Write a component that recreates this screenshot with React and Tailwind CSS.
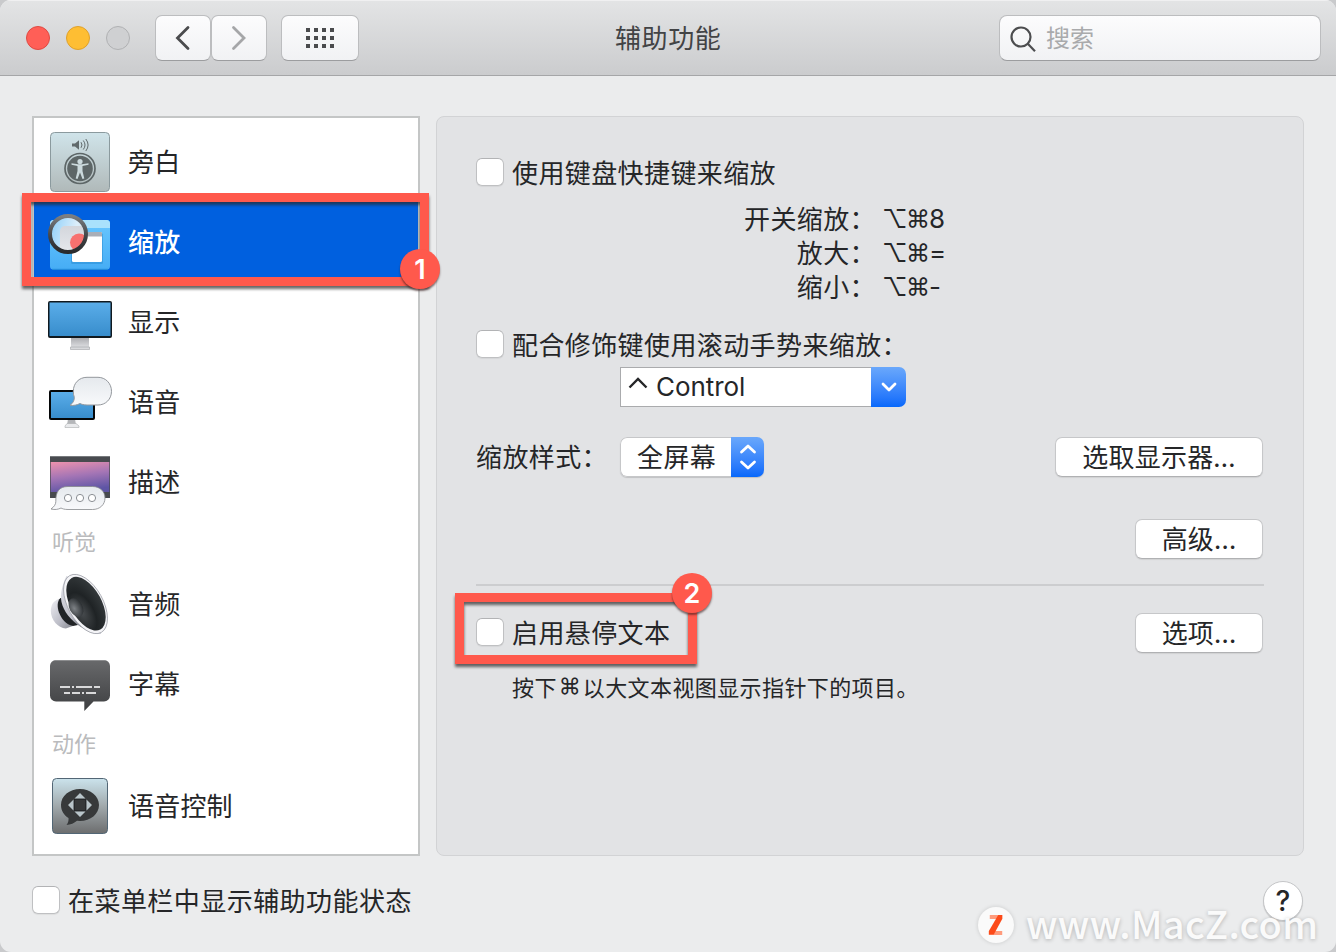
import React from 'react';

const Checkbox = () => (
  <span className="block h-7 w-7 shrink-0 rounded-[6px] border border-[#bfc0c2] border-t-[#b2b3b5] bg-white shadow-[0_1px_1px_rgba(0,0,0,0.06)]" />
);

const PushButton = ({ className, children }) => (
  <button
    className={`mr-px flex h-10 items-center justify-center rounded-[7px] border border-[#c6c7c9] border-b-[#b0b1b3] bg-white pb-[2px] leading-[34px] tracking-[0.2px] shadow-[0_1px_1px_rgba(0,0,0,0.08)] ${className}`}
  >
    {children}
  </button>
);

const Badge = ({ className, children }) => (
  <span
    className={`absolute flex h-10 w-10 items-center justify-center rounded-full bg-[#ff594c] pt-px font-['Inter',sans-serif] text-[27px] leading-none font-semibold tracking-normal text-white shadow-[0_2px_2px_rgba(60,30,30,0.6)] ${className}`}
  >
    {children}
  </span>
);

const VoiceOverIcon = () => (
  <svg width="64" height="64" viewBox="0 0 64 64">
    <defs>
      <linearGradient id="vo" x1="0" y1="0" x2="0" y2="1">
        <stop offset="0" stopColor="#d0e4ea" />
        <stop offset="1" stopColor="#b0b9b9" />
      </linearGradient>
    </defs>
    <rect x="2.5" y="2.5" width="59" height="59" rx="4" fill="url(#vo)" stroke="#8b9a9e" />
    <path d="M24 13.5h3l4-3.3v9.6l-4-3.3h-3z" fill="#60696b" />
    <path d="M33 12.2q2 2.8 0 5.6M35.3 10.5q3.4 4.5 0 9M37.8 9q4.6 6 0 12" fill="none" stroke="#60696b" strokeWidth="1" />
    <circle cx="32" cy="38.500" r="15" fill="none" stroke="#5d6667" strokeWidth="1.700" />
    <circle cx="32" cy="38.500" r="12.800" fill="#5d6667" />
    <circle cx="32" cy="31.600" r="2.600" fill="#cbd9dc" />
    <path d="M23.500 34.700L29.500 36v5l-1.800 7.500 1.800.5L32 42.500l2.500 6.500 1.800-.5L34.500 41v-5l6-1.300v-1.400l-6.500 1h-4l-6.500-1z" fill="#cbd9dc" />
  </svg>
);

const ZoomIcon = () => (
  <svg width="64" height="64" viewBox="0 0 64 64" className="overflow-visible">
    <defs>
      <linearGradient id="zw" x1="0" y1="0" x2="0" y2="1">
        <stop offset="0" stopColor="#69c7ff" />
        <stop offset="1" stopColor="#46adf5" />
      </linearGradient>
      <linearGradient id="zr" x1="0" y1="0" x2="0" y2="1">
        <stop offset="0" stopColor="#7b7e81" />
        <stop offset=".6" stopColor="#3f4245" />
        <stop offset="1" stopColor="#292b2d" />
      </linearGradient>
      <linearGradient id="zg" x1="0" y1=".2" x2="1" y2=".5">
        <stop offset="0" stopColor="#8fd0fa" />
        <stop offset="0.7" stopColor="#dceefa" />
        <stop offset="1" stopColor="#d5e4ee" />
      </linearGradient>
      <linearGradient id="zp" x1="0" y1="0" x2="0" y2="1">
        <stop offset="0" stopColor="#d3d6dc" />
        <stop offset="1" stopColor="#eceef1" />
      </linearGradient>
      <clipPath id="zc"><circle cx="20" cy="24" r="17" /></clipPath>
    </defs>
    <rect x="2" y="10" width="60" height="49.500" rx="3.500" fill="url(#zw)" />
    <path d="M2 18V13.500A3.500 3.500 0 0 1 5.500 10h53A3.500 3.500 0 0 1 62 13.500V18z" fill="#a9e1fc" />
    <path d="M4 59.300h56" stroke="#258ed9" strokeWidth="1" />
    <rect x="23" y="23" width="32" height="31" rx="1.500" fill="#2387cd" opacity=".45" />
    <rect x="24" y="22" width="30" height="30" rx="1.500" fill="#fff" />
    <path d="M24 26.500v-3.500q0-1 1-1h28q1 0 1 1v3.500z" fill="#a9aeb7" />
    <circle cx="20" cy="24" r="18" fill="url(#zg)" />
    <g clipPath="url(#zc)">
      <rect x="12" y="16" width="34" height="34" rx="5" fill="url(#zp)" />
      <circle cx="31" cy="32.500" r="9" fill="#f8716f" />
    </g>
    <circle cx="20" cy="24" r="18" fill="none" stroke="url(#zr)" strokeWidth="4" />
  </svg>
);

const DisplayIcon = () => (
  <svg width="64" height="64" viewBox="0 0 64 64">
    <defs>
      <linearGradient id="scr" x1="0" y1="0" x2="0" y2="1">
        <stop offset="0" stopColor="#5aade9" />
        <stop offset="1" stopColor="#388dcc" />
      </linearGradient>
      <linearGradient id="std" x1="0" y1="0" x2="0" y2="1">
        <stop offset="0" stopColor="#a7a8ac" />
        <stop offset="1" stopColor="#dcdde0" />
      </linearGradient>
    </defs>
    <path d="M23 47h18v10H23z" fill="url(#std)" />
    <path d="M22.500 57h19v2.500h-19z" fill="#d8d9dc" stroke="#9fa1a4" strokeWidth=".6" />
    <rect x="0" y="11" width="64" height="37" rx="2" fill="#10191f" />
    <rect x="1.500" y="12.500" width="61" height="33.500" fill="url(#scr)" />
  </svg>
);

const SpeechIcon = () => (
  <svg width="64" height="64" viewBox="0 0 64 64">
    <defs>
      <linearGradient id="sb" x1="0" y1="0" x2="0" y2="1">
        <stop offset="0" stopColor="#e5e9ed" />
        <stop offset="1" stopColor="#f8f9fb" />
      </linearGradient>
    </defs>
    <path d="M20 49h7l1 6h-9z" fill="#b4b6b9" />
    <path d="M17 56l2-2.500h9L31 56v1.500H17z" fill="#e9eaec" stroke="#aaacae" strokeWidth=".6" />
    <rect x="1" y="20" width="46" height="30" rx="2" fill="#050708" />
    <rect x="3" y="22" width="42" height="26" fill="url(#scr)" />
    <path d="M22.500 35c3-2 4.500-5 4.300-8-.8-2-1-4-1-6C25.800 13 31.500 7 39.500 7h11C58 7 64 13 64 21s-6 13.700-13.500 13.700H39.500c-3.500 0-5.500-.8-7-1.500-3 1.500-6.500 2.300-10 1.800z" transform="translate(-.5 .3)" fill="url(#sb)" stroke="#94989d" strokeWidth="1" />
  </svg>
);

const DescriptionsIcon = () => (
  <svg width="64" height="64" viewBox="0 0 64 64">
    <defs>
      <linearGradient id="dp" x1=".1" y1="0" x2=".35" y2="1">
        <stop offset="0" stopColor="#ea91ae" />
        <stop offset=".5" stopColor="#a475b5" />
        <stop offset="1" stopColor="#5e55a5" />
      </linearGradient>
    </defs>
    <rect x="2" y="6" width="60" height="42" fill="#484b4f" />
    <path d="M2 6.500h60" stroke="#777a7d" />
    <rect x="2.700" y="12" width="58.600" height="30" fill="url(#dp)" />
    <path d="M3 59c3-2 5-5 4.800-7.500C7.600 42 11 36.500 20 36.500h24.500C52 36.500 57 41.500 57 48s-5 11.500-12.500 11.500H20c-4 0-5.500-.8-7-1.500-3 1.500-6 2-10 1z" fill="url(#sb)" stroke="#85888c" strokeWidth=".8" />
    <g fill="#fff" stroke="#8b8f94" strokeWidth="1">
      <circle cx="20" cy="48" r="3.600" />
      <circle cx="32" cy="48" r="3.600" />
      <circle cx="44" cy="48" r="3.600" />
    </g>
  </svg>
);

const AudioIcon = () => (
  <svg width="64" height="64" viewBox="0 0 64 64">
    <defs>
      <linearGradient id="ab" x1="0" y1="0" x2="1" y2="1">
        <stop offset="0" stopColor="#eeeeF3" />
        <stop offset=".6" stopColor="#bbbcc6" />
        <stop offset="1" stopColor="#85878f" />
      </linearGradient>
      <linearGradient id="ac" x1="0" y1=".3" x2=".8" y2="1">
        <stop offset="0" stopColor="#d5d6de" />
        <stop offset=".45" stopColor="#bdbec8" />
        <stop offset=".7" stopColor="#70737c" />
        <stop offset="1" stopColor="#c5c6cf" />
      </linearGradient>
      <radialGradient id="ad" cx=".25" cy=".6" r=".75">
        <stop offset="0" stopColor="#484c4f" />
        <stop offset=".5" stopColor="#1f2325" />
        <stop offset="1" stopColor="#33383a" />
      </radialGradient>
      <radialGradient id="ae" cx=".35" cy=".5" r=".65">
        <stop offset="0" stopColor="#7d8185" />
        <stop offset="1" stopColor="#2a2e31" />
      </radialGradient>
    </defs>
    <path d="M11 27C5 29 3 33 2.800 39c.2 9 7 17 15 17.500l7-2.500-11-27z" fill="url(#ab)" />
    <path d="M12.500 26c-3.500 3-3.500 9-1.500 14.500S18 53 25 54l5-1-13-27z" fill="#202326" />
    <path d="M18.500 4C14.500 12 12 22 13.500 30c2 9 9 18.500 19.500 25 7 4.500 14 7.500 20 7L30 10z" fill="url(#ac)" />
    <ellipse cx="37.500" cy="32" rx="17.500" ry="32.500" transform="rotate(-29 37.500 32)" fill="#f4f4f7" stroke="#a2a4ac" strokeWidth=".8" />
    <ellipse cx="38" cy="31.700" rx="15.500" ry="29.500" transform="rotate(-29 38 31.700)" fill="url(#ad)" />
    <ellipse cx="28" cy="35.500" rx="6.500" ry="10" transform="rotate(-29 28 35.500)" fill="url(#ae)" />
  </svg>
);

const CaptionsIcon = () => (
  <svg width="64" height="64" viewBox="0 0 64 64">
    <defs>
      <linearGradient id="cb" x1="0" y1="0" x2="0" y2="1">
        <stop offset="0" stopColor="#68696b" />
        <stop offset="1" stopColor="#3e3f41" />
      </linearGradient>
    </defs>
    <path d="M8 8h48a6 6 0 0 1 6 6v29.500a6 6 0 0 1-6 6H45.500L36.300 59v-9.500H8a6 6 0 0 1-6-6V14a6 6 0 0 1 6-6z" fill="url(#cb)" />
    <path d="M7 8.500h50" stroke="#8c8d8f" strokeWidth="1" />
    <path d="M12 35h10M24 35h2M28 35h16M46 35h6M16 41h6M24 41h8M34 41h2M38 41h10" stroke="#d9d9da" strokeWidth="1.800" />
  </svg>
);

const VoiceControlIcon = () => (
  <svg width="64" height="64" viewBox="0 0 64 64">
    <defs>
      <linearGradient id="vc" x1="0" y1="0" x2="0" y2="1">
        <stop offset="0" stopColor="#cbe3ec" />
        <stop offset=".5" stopColor="#a1a9ac" />
        <stop offset="1" stopColor="#6c6d6e" />
      </linearGradient>
    </defs>
    <rect x="4.500" y="4.500" width="55" height="55" rx="4" fill="url(#vc)" stroke="#526675" />
    <path d="M32 15c-10.500 0-19 6.800-19 16 0 6 3.200 10.500 7.500 13 .3 3-.5 5-2 7 4-.3 8-2 10.500-4.300l3 .3c10.500 0 19-7 19-16s-8.500-16-19-16z" fill="#37393a" />
    <path d="M32 19l5.500 5.500h-11zM32 43l5.500-5.500h-11zM20 31l5.500-5.500v11zM44 31l-5.500-5.500v11z" fill="#b9c5ca" />
    <rect x="26.500" y="25.500" width="11" height="11" fill="#37393a" stroke="#222425" strokeWidth=".7" />
  </svg>
);

const Item = ({ icon: Icon, label, selected, children }) => (
  <div
    className={`relative flex h-20 shrink-0 items-center gap-4 pl-[14px] text-[26px] leading-[34px] tracking-[0.2px] ${
      selected ? 'bg-[#0060df] text-white font-medium' : ''
    }`}
  >
    <Icon />
    <span className="pb-[2px]">{label}</span>
    {children}
  </div>
);

const Group = ({ label }) => (
  <div className="h-[42px] shrink-0 pl-[18px] text-[22px] leading-[36px] text-[#babbbd]">{label}</div>
);

const Shortcut = ({ label, k }) => (
  <div className="flex h-[34px] items-center">
    <span className="w-[400px] pb-[2px] text-right tracking-[0.4px]">{label}</span>
    <span className="ml-[6px] flex items-center font-['Inter','DejaVu_Sans',sans-serif] text-[26px]">
      <span className="w-6 text-[25px]">⌥</span>
      <span className="w-[23px] text-[24px]">⌘</span>
      <span>{k}</span>
    </span>
  </div>
);

export default function App() {
  return (
    <div className="h-[952px] w-[1336px] overflow-hidden bg-[#c9cacc]">
      <div className="relative flex h-full w-full flex-col overflow-hidden rounded-[11px] bg-[#ebeced] font-['Noto_Sans_CJK_SC',sans-serif] text-[26px] text-[#252628]">
        <header className="flex h-[76px] shrink-0 items-center border-t border-b border-t-[#f0f0f1] border-b-[#a5a6a8] bg-linear-to-b from-[#e3e4e5] to-[#cbccce] pr-[15px] pl-[26px]">
          <div className="flex w-[129px] gap-4">
            <span className="h-6 w-6 rounded-full border border-[#df4a43] bg-[#ff5f57]" />
            <span className="h-6 w-6 rounded-full border border-[#dfa12c] bg-[#febe33]" />
            <span className="h-6 w-6 rounded-full border border-[#b0b1b3] bg-[#cfd0d2]" />
          </div>
          <div className="flex">
            <button className="flex h-[46px] w-[56px] items-center justify-center rounded-[7px] border border-[#bcbdbf] border-b-[#9c9d9f] bg-linear-to-b from-[#fcfcfd] to-[#f1f2f4]">
              <svg width="16" height="26" viewBox="0 0 16 26"><path d="M13 2.500L2.500 13 13 23.500" fill="none" stroke="#4a4b4d" strokeWidth="2.800" strokeLinecap="round" /></svg>
            </button>
            <button className="flex h-[46px] w-[56px] items-center justify-center rounded-[7px] border border-[#bcbdbf] border-b-[#9c9d9f] bg-linear-to-b from-[#fcfcfd] to-[#f1f2f4]">
              <svg width="16" height="26" viewBox="0 0 16 26"><path d="M2.500 2.500L13 13 2.500 23.500" fill="none" stroke="#a5a6a8" strokeWidth="2.800" strokeLinecap="round" /></svg>
            </button>
          </div>
          <button className="ml-[14px] flex h-[46px] w-[78px] items-center justify-center rounded-[7px] border border-[#bcbdbf] border-b-[#9c9d9f] bg-linear-to-b from-[#fcfcfd] to-[#f1f2f4]">
            <svg width="28" height="20" viewBox="0 0 28 20">
              <path d="M0 2h28M0 10h28M0 18h28" stroke="#4a4b4d" strokeWidth="4" strokeDasharray="4 4" />
            </svg>
          </button>
          <h1 className="ml-[256px] flex-1 pb-[2px] text-[26px] leading-[36px] tracking-[0.6px] text-[#424345]">辅助功能</h1>
          <div className="flex h-[46px] w-[322px] items-center rounded-[8px] border border-[#bcbdbf] border-b-[#9c9d9f] bg-linear-to-b from-[#fcfcfd] to-[#f1f2f4] pl-[10px] text-[24px] leading-[36px] text-[#a9aaac]">
            <svg width="27" height="27" viewBox="0 0 27 27" fill="none" stroke="#4c4d4f" strokeWidth="2.200" className="mt-[2px]"><circle cx="11" cy="11" r="9.500" /><path d="M17.800 17.800l7.200 7.400" /></svg>
            <span className="ml-[9px] pb-[2px]">搜索</span>
          </div>
        </header>

        <main className="flex h-[780px] shrink-0 gap-4 px-8 pt-10">
          <aside className="flex h-[740px] w-[388px] flex-col border-2 border-[#c4c6c6] bg-white pt-1">
            <Item icon={VoiceOverIcon} label="旁白" />
            <Item icon={ZoomIcon} label="缩放" selected>
              <span className="absolute -top-[9px] -left-[12px] z-10 h-[93px] w-[407px] border-[9px] border-[#ff594c] [filter:drop-shadow(0_3px_1.5px_rgba(40,40,40,0.7))]" />
              <Badge className="top-[47px] left-[366px] z-20">1</Badge>
            </Item>
            <Item icon={DisplayIcon} label="显示" />
            <Item icon={SpeechIcon} label="语音" />
            <Item icon={DescriptionsIcon} label="描述" />
            <Group label="听觉" />
            <Item icon={AudioIcon} label="音频" />
            <Item icon={CaptionsIcon} label="字幕" />
            <Group label="动作" />
            <Item icon={VoiceControlIcon} label="语音控制" />
          </aside>

          <section className="flex h-[740px] w-[868px] flex-col rounded-[8px] border border-[#d2d3d5] bg-[#e2e3e5] px-[39px] pt-[38px] leading-[34px]">
            <label className="flex h-[34px] items-center gap-2 tracking-[0.4px]">
              <Checkbox />
              <span className="pb-px">使用键盘快捷键来缩放</span>
            </label>
            <div className="mt-[13px]">
              <Shortcut label="开关缩放：" k="8" />
              <Shortcut label="放大：" k="=" />
              <Shortcut label="缩小：" k="-" />
            </div>
            <label className="mt-[23px] flex h-[34px] items-center gap-2 tracking-[0.4px]">
              <Checkbox />
              <span className="pb-px">配合修饰键使用滚动手势来缩放：</span>
            </label>
            <div className="mt-[6px] ml-36 flex h-10 w-[286px] font-['Inter',sans-serif]">
              <div className="flex flex-1 items-center border border-r-0 border-[#aaabad] bg-white pl-[7px]">
                <svg width="20" height="12" viewBox="0 0 20 12" className="mb-2"><path d="M1.500 10.500L10 2l8.500 8.500" fill="none" stroke="#252628" strokeWidth="2.400" /></svg>
                <span className="ml-[8px] tracking-[-0.05px]">Control</span>
              </div>
              <div className="flex w-[35px] items-center justify-center rounded-r-[7px] bg-linear-to-b from-[#6aa8fb] to-[#0568fb]">
                <svg width="16" height="10" viewBox="0 0 16 10"><path d="M2 2l6 6 6-6" fill="none" stroke="#fff" strokeWidth="2.800" strokeLinecap="round" strokeLinejoin="round" /></svg>
              </div>
            </div>
            <div className="mt-[30px] flex h-10 items-center">
              <span className="w-36 pb-[2px] tracking-[0.4px]">缩放样式：</span>
              <div className="flex h-10 w-36 overflow-hidden rounded-[7px] shadow-[0_1px_1px_rgba(0,0,0,0.15)]">
                <span className="flex flex-1 items-center rounded-l-[7px] border border-r-0 border-[#c6c7c9] bg-white pb-[2px] pl-4 tracking-[0.4px]">全屏幕</span>
                <span className="flex w-[33px] items-center justify-center bg-linear-to-b from-[#6aa8fb] to-[#0568fb]">
                  <svg width="18" height="26" viewBox="0 0 18 26"><path d="M2.500 8L9 2l6.500 6M2.500 18L9 24l6.500-6" fill="none" stroke="#fff" strokeWidth="2.800" strokeLinecap="round" strokeLinejoin="round" /></svg>
                </span>
              </div>
              <PushButton className="ml-auto w-[208px]">选取显示器...</PushButton>
            </div>
            <PushButton className="mt-[42px] w-32 shrink-0 self-end">高级...</PushButton>
            <div className="mt-[25px] h-[2px] shrink-0 bg-[#cccdcf]" />
            <div className="relative mt-[27px] flex h-10 shrink-0 items-center">
              <label className="flex items-center gap-2 pb-[2px] tracking-[0.4px]">
                <Checkbox />
                启用悬停文本
              </label>
              <span className="absolute -top-[20px] -left-[21px] h-[71px] w-[242px] border-[9px] border-[#ff594c] [filter:drop-shadow(0_3px_1.5px_rgba(40,40,40,0.7))]" />
              <Badge className="-top-[40px] left-[196px]">2</Badge>
              <PushButton className="ml-auto w-32">选项...</PushButton>
            </div>
            <p className="mt-[16px] flex h-[34px] items-center pl-9 text-[22px] tracking-[0.4px]">
              按下
              <span className="w-[26px] text-center font-['Inter','DejaVu_Sans',sans-serif] text-[22px] tracking-normal">⌘</span>
              以大文本视图显示指针下的项目。
            </p>
          </section>
        </main>

        <footer className="flex h-[90px] items-center justify-between pr-[33px] pl-8">
          <label className="flex items-center gap-2 pb-[2px] leading-[34px] tracking-[0.45px]">
            <Checkbox />
            在菜单栏中显示辅助功能状态
          </label>
          <button className="flex h-10 w-10 items-center justify-center rounded-full border border-[#c4c5c7] bg-white font-['Inter',sans-serif] text-[28px] font-medium shadow-[0_1px_1px_rgba(0,0,0,0.15)]">?</button>
        </footer>

        <div className="absolute top-[900px] left-[978px] flex h-[50px] items-center text-white">
          <span className="flex h-9 w-9 items-center justify-center rounded-full bg-[#fafafa] shadow-[0_0_4px_rgba(0,0,0,0.15)]">
            <svg width="16" height="20" viewBox="0 0 18 20" preserveAspectRatio="none"><path d="M2 0h14v4H2zM1 16h15v4H1z" fill="#ff9b7c" /><path d="M11.500 0H16v4L6.500 19.500H1V16z" fill="#fc4a19" /></svg>
          </span>
          <span className="mb-[4px] ml-[12px] text-[38px] leading-[50px] font-medium tracking-[0.35px] text-[#fafafa] [text-shadow:0_1px_4px_rgba(0,0,0,0.25)]">www.MacZ.com</span>
        </div>
      </div>
    </div>
  );
}
